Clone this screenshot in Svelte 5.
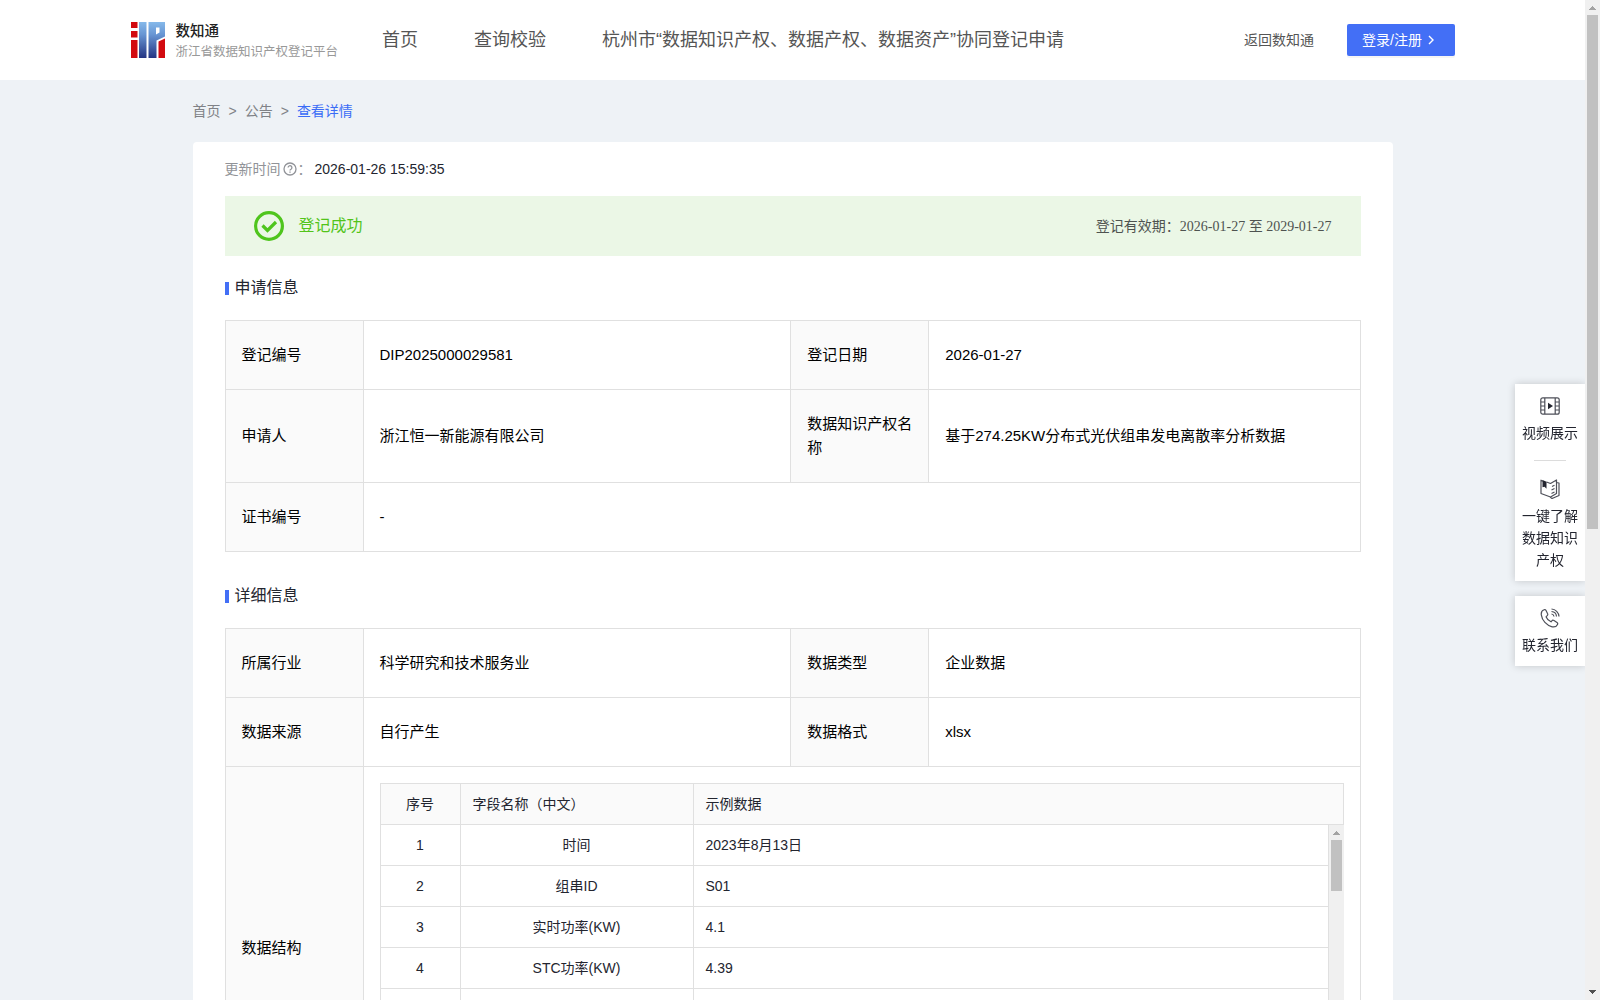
<script lang="ts">
  type Cell = { label: string, value: string, wide?: boolean }

  const navItems: string[] = ['首页', '查询校验', '杭州市“数据知识产权、数据产权、数据资产”协同登记申请']

  const applyRows: Cell[][] = [
    [{ label: '登记编号', value: 'DIP2025000029581' }, { label: '登记日期', value: '2026-01-27' }],
    [{ label: '申请人', value: '浙江恒一新能源有限公司' }, { label: '数据知识产权名称', value: '基于274.25KW分布式光伏组串发电离散率分析数据' }],
    [{ label: '证书编号', value: '-', wide: true }],
  ]

  const detailRows: Cell[][] = [
    [{ label: '所属行业', value: '科学研究和技术服务业' }, { label: '数据类型', value: '企业数据' }],
    [{ label: '数据来源', value: '自行产生' }, { label: '数据格式', value: 'xlsx' }],
  ]

  const fields = [
    { name: '时间', sample: '2023年8月13日' },
    { name: '组串ID', sample: 'S01' },
    { name: '实时功率(KW)', sample: '4.1' },
    { name: 'STC功率(KW)', sample: '4.39' },
    { name: '', sample: '' },
  ]
</script>

{#snippet infoRows(rows: Cell[][])}
  {#each rows as row}
    <tr>
      {#each row as cell}
        <th scope="row">{cell.label}</th>
        <td colspan={cell.wide ? 3 : 1}>{cell.value}</td>
      {/each}
    </tr>
  {/each}
{/snippet}

{#snippet infoCols()}
  <colgroup>
    <col class="col-label">
    <col>
    <col class="col-label">
    <col class="col-value">
  </colgroup>
{/snippet}

{#snippet arrow(down: boolean, active: boolean)}
  <svg class="arrow" class:active viewBox="0 0 15 15" shape-rendering="crispEdges" aria-hidden="true">
    <path d={down ? 'M4 5h7v1h-1v1h-1v1h-1v1h-1v-1h-1v-1h-1v-1h-1z' : 'M7 6h1v1h1v1h1v1h1v1h-7v-1h1v-1h1v-1h1z'} />
  </svg>
{/snippet}

<div class="shell">
  <div class="page">
    <header class="header">
      <a href="#home" class="logo" aria-label="数知通">
        <svg viewBox="0 0 420 80" role="img" aria-label="浙江省数据知识产权登记平台">
          <defs>
            <linearGradient id="blue" x1="0" y1="0" x2="0" y2="1">
              <stop offset="0" stop-color="#86b9ea" />
              <stop offset="0.35" stop-color="#6795d3" />
              <stop offset="1" stop-color="#243482" />
            </linearGradient>
          </defs>
          <path fill="#d20a10" d="M2 4h13v12H2zM2 22h13v13H2zM2 40h13v36H2zM57 43l13-6v39H57z" />
          <path fill="url(#blue)" fill-rule="evenodd" d="M18 4h15v72H18zM37 4h33v29L53 41v35H37zM52 15v14l7-4V15z" />
          <text class="logo-name" x="91" y="31">数知通</text>
          <text class="logo-sub" x="91" y="71">浙江省数据知识产权登记平台</text>
        </svg>
      </a>
      <nav class="nav">
        {#each navItems as item}
          <a href="#nav">{item}</a>
        {/each}
      </nav>
      <a href="#back" class="back">返回数知通</a>
      <button class="login">
        登录/注册
        <svg viewBox="0 0 8 10" aria-hidden="true"><path d="M2 1l4 4-4 4" /></svg>
      </button>
    </header>

    <main class="content">
      <div class="crumbs">
        <a href="#home">首页</a>
        <span>&gt;</span>
        <a href="#notice">公告</a>
        <span>&gt;</span>
        <a href="#detail" class="current">查看详情</a>
      </div>

      <div class="card">
        <div class="updated">
          <span>更新时间</span>
          <svg viewBox="0 0 14 14" aria-hidden="true">
            <circle cx="7" cy="7" r="6" />
            <path d="M5.1 5.6a1.9 1.9 0 1 1 2.9 1.6c-.7.4-1 .7-1 1.3M7 9.5v1.2" />
          </svg>
          <span>：</span>
          <time>2026-01-26 15:59:35</time>
        </div>

        <div class="banner">
          <svg viewBox="0 0 30 30" aria-hidden="true">
            <circle cx="15" cy="15" r="13.4" />
            <path d="M8.5 14.5l5 5 8.5-8.5" />
          </svg>
          <span class="status">登记成功</span>
          <span class="valid">登记有效期：<span class="dates">2026-01-27 至 2029-01-27</span></span>
        </div>

        <section>
          <h2>申请信息</h2>
          <table class="info">
            {@render infoCols()}
            <tbody>
              {@render infoRows(applyRows)}
            </tbody>
          </table>
        </section>

        <section class="detail">
          <h2>详细信息</h2>
          <table class="info">
            {@render infoCols()}
            <tbody>
              {@render infoRows(detailRows)}
              <tr>
                <th scope="row">数据结构</th>
                <td colspan="3" class="structure">
                  <table class="fields">
                    <colgroup><col class="col-index"><col class="col-name"><col></colgroup>
                    <thead>
                      <tr>
                        <th class="center">序号</th>
                        <th>字段名称（中文）</th>
                        <th>示例数据</th>
                      </tr>
                    </thead>
                  </table>
                  <div class="fields-body">
                    <table class="fields">
                      <colgroup><col class="col-index"><col class="col-name"><col></colgroup>
                      <tbody>
                        {#each fields as field, i}
                          <tr>
                            <td class="center">{field.name ? i + 1 : ''}</td>
                            <td class="center">{field.name}</td>
                            <td>{field.sample}</td>
                          </tr>
                        {/each}
                      </tbody>
                    </table>
                    <div class="scrollbar">
                      {@render arrow(false, false)}
                      <div class="track"><div class="thumb short"></div></div>
                      {@render arrow(true, true)}
                    </div>
                  </div>
                </td>
              </tr>
            </tbody>
          </table>
        </section>
      </div>
    </main>
  </div>

  <div class="scrollbar">
    {@render arrow(false, false)}
    <div class="track"><div class="thumb"></div></div>
    {@render arrow(true, true)}
  </div>
</div>

<aside class="tools">
  <div class="tool-box">
    <a href="#video" class="tool">
      <svg viewBox="0 0 20 20" aria-hidden="true">
        <rect x="0.8" y="1.8" width="18.4" height="16.4" rx="2" />
        <path d="M4.8 2v16M15.2 2v16M1 6h3.8M1 10h3.8M1 14h3.8M15.2 6H19M15.2 10H19M15.2 14H19" />
        <path class="solid" d="M8 6.8l5 3.2-5 3.2z" />
      </svg>
      <span>视频展示</span>
    </a>
    <hr>
    <a href="#guide" class="tool">
      <svg viewBox="0 0 20 20" aria-hidden="true">
        <path d="M10.5 4.5L16.5 1v13.5l-6 3.5L1 14.5V1.2l2 1M6.5 3l4 1.5M16.5 3.5l2.5.5v12.5l-7 3-2-1.5M12 7.500l2.500-1.200M11.500 11l3-1.500M11.500 14.500l3-1.500" />
        <path class="solid" d="M2.500 1l4 1.800v7L4.500 7.800l-2 .5z" />
      </svg>
      <span>一键了解数据知识产权</span>
    </a>
  </div>
  <div class="tool-box">
    <a href="#contact" class="tool">
      <svg viewBox="0 0 20 20" aria-hidden="true">
        <path d="M4 1.8C2 2.6 1 4.5 1.3 6.8c.8 5.7 5.2 10.7 10.9 12 2.3.5 4.4-.5 5.3-2.4.4-.8.1-1.6-.5-2l-3-2c-.8-.5-1.7-.3-2.2.4l-.8 1c-2-.8-4.2-3-5-5l1.200-1.200c.6-.6.7-1.400.3-2.100L5.900 2.300C5.500 1.600 4.700 1.500 4 1.800z" />
        <path d="M11.500 1c4 .2 7.300 3.500 7.500 7.500M11.500 3.500c2.800.2 4.800 2.200 5 5M11.500 6c1.500.2 2.300 1 2.500 2.500" />
      </svg>
      <span>联系我们</span>
    </a>
  </div>
</aside>

<style>
  :global(body) {
    margin: 0;
    font-family: "Liberation Sans", "Noto Sans CJK SC", sans-serif;
    font-size: 14px;
    line-height: 22px;
    color: #23252f;
  }

  a {
    color: inherit;
    text-decoration: none;
  }

  .shell {
    display: flex;
    height: 100vh;
  }

  .page {
    flex: 1;
    min-width: 0;
    overflow-y: auto;
    scrollbar-width: none;
    background: #eef2f6;
  }

  .header {
    display: flex;
    align-items: center;
    height: 80px;
    padding: 0 130px;
    background: white;
    color: #555;
  }

  .logo svg {
    display: block;
    width: 210px;
    height: 40px;
  }

  .logo-name {
    font-size: 29px;
    font-weight: 500;
    fill: #222;
  }

  .logo-sub {
    font-size: 25px;
    fill: #999;
  }

  .nav {
    display: flex;
    flex: 1;
    gap: 56px;
    margin-left: 42px;
    font-size: 18px;
    line-height: 26px;
    white-space: nowrap;
  }

  .back {
    margin-right: 33px;
    white-space: nowrap;
  }

  .login {
    display: flex;
    align-items: center;
    gap: 5px;
    width: 108px;
    height: 32px;
    padding: 0 15px;
    border: 0;
    border-radius: 2px;
    background: #436ff6;
    box-shadow: 0 2px 0 rgba(0, 0, 0, 0.04);
    color: white;
    font: inherit;
    white-space: nowrap;
    cursor: pointer;
  }

  .login svg {
    width: 8px;
    height: 10px;
    fill: none;
    stroke: white;
    stroke-width: 1.4;
  }

  .content {
    max-width: 1200px;
    margin: 0 auto;
  }

  .crumbs {
    display: flex;
    gap: 8px;
    padding: 20px 0;
    color: #808287;
  }

  .crumbs .current {
    color: #3a6cf6;
  }

  .card {
    padding: 16px 32px 32px;
    border-radius: 4px;
    background: white;
  }

  .updated {
    display: flex;
    align-items: center;
    color: #919398;
  }

  .updated svg {
    width: 14px;
    height: 14px;
    margin: 0 1px 0 2px;
    fill: none;
    stroke: #919398;
    stroke-width: 1.3;
  }

  .updated time {
    margin-left: 3px;
    color: #23252f;
  }

  .banner {
    display: flex;
    align-items: center;
    height: 60px;
    margin-top: 16px;
    padding: 0 29px;
    background: #ebf7e6;
  }

  .banner svg {
    width: 30px;
    height: 30px;
    fill: none;
    stroke: #4fc51d;
    stroke-width: 3.2;
  }

  .status {
    flex: 1;
    margin-left: 15px;
    font-size: 16px;
    color: #52c41a;
  }

  .valid {
    color: #4e5350;
  }

  .dates {
    font-family: "Liberation Serif", "Noto Sans CJK SC", serif;
  }

  section {
    padding-top: 20px;
  }

  section.detail {
    padding-top: 32px;
  }

  h2 {
    display: flex;
    align-items: center;
    gap: 6px;
    margin: 0 0 20px;
    font-size: 16px;
    font-weight: 400;
    line-height: 24px;
  }

  h2::before {
    content: "";
    width: 4px;
    height: 13px;
    background: #436ff6;
  }

  table {
    width: 100%;
    table-layout: fixed;
    border-collapse: collapse;
  }

  th,
  td {
    border: 1px solid #e0e0e0;
    font-weight: 400;
    text-align: left;
  }

  th {
    background: #fafafa;
  }

  .col-label {
    width: 138px;
  }

  .col-value {
    width: 38%;
  }

  .info {
    color: black;
    font-size: 15px;
    line-height: 24px;
  }

  .info th,
  .info td {
    padding: 22px 16px;
  }

  .info .structure {
    padding: 16px;
  }

  .col-index {
    width: 80px;
  }

  .col-name {
    width: 233px;
  }

  .fields {
    color: #23252f;
    font-size: 14px;
    line-height: 20px;
  }

  .info .fields th,
  .info .fields td {
    height: 20px;
    padding: 10px 12px;
  }

  .info .fields .center {
    text-align: center;
  }

  .fields-body {
    display: flex;
    align-items: flex-start;
    height: 287px;
    overflow: hidden;
  }

  .fields-body .fields {
    flex: 1;
    margin-top: -1px;
  }

  .scrollbar {
    display: flex;
    flex-direction: column;
    align-self: stretch;
    width: 15px;
    background: #f0f0f0;
  }

  .track {
    flex: 1;
    padding: 0 2px;
  }

  .thumb {
    height: 53%;
    background: #c1c1c1;
  }

  .thumb.short {
    height: 51px;
  }

  .arrow {
    display: block;
    width: 15px;
    height: 15px;
    fill: #a3a3a3;
  }

  .arrow.active {
    fill: #505050;
  }

  .tools {
    position: fixed;
    top: 384px;
    right: 15px;
    display: flex;
    flex-direction: column;
    gap: 15px;
    width: 70px;
    clip-path: inset(-12px 0 -12px -12px);
  }

  .tool-box {
    padding: 12px 7px 10px;
    background: white;
    box-shadow: 0 0 8px rgba(0, 0, 0, 0.18);
  }

  .tool {
    display: flex;
    flex-direction: column;
    align-items: center;
    gap: 6px;
    text-align: center;
  }

  .tool svg {
    width: 20px;
    height: 20px;
    fill: none;
    stroke: #4d4f58;
    stroke-width: 1.2;
    stroke-linejoin: round;
  }

  .tool .solid {
    fill: #23252f;
    stroke: none;
  }

  hr {
    width: 32px;
    height: 1px;
    margin: 16px auto 18px;
    border: 0;
    background: #dcdcdc;
  }
</style>
